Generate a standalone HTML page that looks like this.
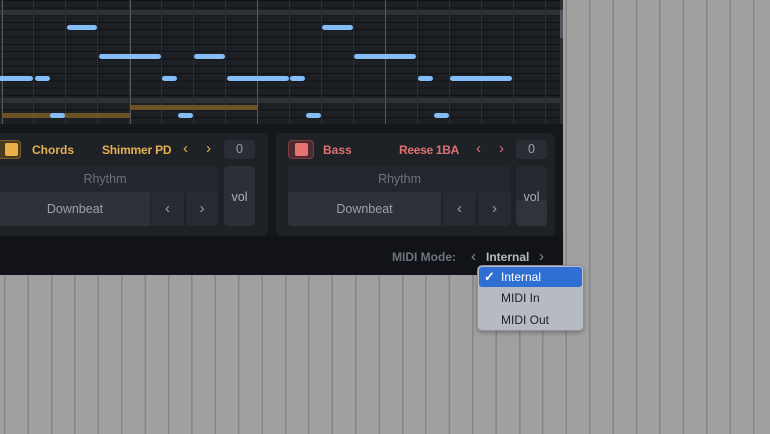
<!DOCTYPE html>
<html><head><meta charset="utf-8"><style>
*{margin:0;padding:0;box-sizing:border-box}
body{width:770px;height:434px;overflow:hidden;position:relative;font-family:"Liberation Sans",sans-serif;
background:repeating-linear-gradient(90deg,#868686 0 1.5px,#a0a0a0 1.5px 23.4px);background-position:4px 0}
.abs{position:absolute}
#main{left:0;top:0;width:563px;height:275px;background:#15171c;border-bottom-right-radius:6px;overflow:hidden}
.note{position:absolute;height:5px;border-radius:3px;background:#84bdf7}
.brown{position:absolute;height:5px;background:#6b5326}
.panel{position:absolute;top:133px;height:103px;background:#1e2227;border-radius:6px}
.t{position:absolute;font-size:12px;font-weight:bold;line-height:16px}
.c{position:absolute;font-size:15px;line-height:16px}
.box{position:absolute;border-radius:4px;color:#9aa0a8;font-size:12.5px;text-align:center}
.g{color:#6e737b}
</style></head><body>
<div id="main" class="abs">
 <div class="abs" style="left:0;top:0;width:560px;height:124px;background:
  repeating-linear-gradient(180deg,#0f1115 0 1px,#1c1f24 1px 7.3px)"></div>
 <div class="abs" style="left:0;top:10px;width:560px;height:5px;background:#2e3136"></div>
 <div class="abs" style="left:0;top:98px;width:560px;height:5px;background:#2e3136"></div>
 <div class="abs" style="left:0;top:0;width:560px;height:124px;background:repeating-linear-gradient(90deg,#2a2d33 0 1px,transparent 1px 32px);background-position:1px 0"></div>
 <div class="abs" style="left:2px;top:0;width:1px;height:124px;background:#55585e"></div>
 <div class="abs" style="left:130px;top:0;width:1px;height:124px;background:#55585e"></div>
 <div class="abs" style="left:257px;top:0;width:1px;height:124px;background:#55585e"></div>
 <div class="abs" style="left:385px;top:0;width:1px;height:124px;background:#55585e"></div>
 <div class="abs" style="left:560px;top:0;width:3px;height:124px;background:#2b2e33"></div>
 <div class="abs" style="left:560px;top:10px;width:3px;height:28px;background:#55585e"></div>
 <div class="note" style="left:67px;top:25px;width:30px"></div>
 <div class="note" style="left:322px;top:25px;width:31px"></div>
 <div class="note" style="left:99px;top:54px;width:62px"></div>
 <div class="note" style="left:194px;top:54px;width:31px"></div>
 <div class="note" style="left:354px;top:54px;width:62px"></div>
 <div class="note" style="left:-3px;top:76px;width:36px"></div>
 <div class="note" style="left:35px;top:76px;width:15px"></div>
 <div class="note" style="left:162px;top:76px;width:15px"></div>
 <div class="note" style="left:227px;top:76px;width:62px"></div>
 <div class="note" style="left:290px;top:76px;width:15px"></div>
 <div class="note" style="left:418px;top:76px;width:15px"></div>
 <div class="note" style="left:450px;top:76px;width:62px"></div>
 <div class="brown" style="left:130px;top:105px;width:127px"></div>
 <div class="brown" style="left:2px;top:113px;width:128px"></div>
 <div class="note" style="left:50px;top:113px;width:15px"></div>
 <div class="note" style="left:178px;top:113px;width:15px"></div>
 <div class="note" style="left:306px;top:113px;width:15px"></div>
 <div class="note" style="left:434px;top:113px;width:15px"></div>

 <div class="panel" style="left:-8px;width:276px"></div>
 <div class="abs" style="left:-8px;top:140px;width:29px;height:19px;border-radius:4px;background:#4a3a1e;border:1px solid #7a5e2a"></div>
 <div class="abs" style="left:5px;top:143px;width:13px;height:13px;border-radius:2px;background:#eab04c"></div>
 <div class="t" style="left:32px;top:142px;color:#e6b050">Chords</div>
 <div class="t" style="left:102px;top:142px;color:#e6b050;letter-spacing:-0.2px">Shimmer PD</div>
 <div class="c" style="left:183px;top:141px;color:#e6b050">‹</div>
 <div class="c" style="left:206px;top:141px;color:#e6b050">›</div>
 <div class="box" style="left:224px;top:140px;width:31px;height:19px;background:#2a2e34;line-height:19px">0</div>
 <div class="box g" style="left:-8px;top:166px;width:226px;height:28px;background:#23272d;line-height:26px">Rhythm</div>
 <div class="box" style="left:-8px;top:192px;width:158px;height:34px;background:#2e3238;line-height:34px;border-radius:0 0 0 4px;padding-left:8px">Downbeat</div>
 <div class="box" style="left:151px;top:192px;width:33px;height:34px;background:#272b31;line-height:34px;border-radius:0;font-size:15px">‹</div>
 <div class="box" style="left:186px;top:192px;width:32px;height:34px;background:#272b31;line-height:34px;border-radius:0 0 4px 0;font-size:15px">›</div>
 <div class="box" style="left:224px;top:166px;width:31px;height:60px;background:#2c3036;padding-top:23px;line-height:16px;color:#aab0b8">vol</div>

 <div class="panel" style="left:276px;width:279px"></div>
 <div class="abs" style="left:288px;top:140px;width:26px;height:19px;border-radius:4px;background:#4a2a2c;border:1px solid #7a3e40"></div>
 <div class="abs" style="left:295px;top:143px;width:13px;height:13px;border-radius:2px;background:#e87272"></div>
 <div class="t" style="left:323px;top:142px;color:#e07070">Bass</div>
 <div class="t" style="left:399px;top:142px;color:#e07070;letter-spacing:-0.3px">Reese 1BA</div>
 <div class="c" style="left:476px;top:141px;color:#e07070">‹</div>
 <div class="c" style="left:499px;top:141px;color:#e07070">›</div>
 <div class="box" style="left:516px;top:140px;width:31px;height:19px;background:#2a2e34;line-height:19px">0</div>
 <div class="box g" style="left:288px;top:166px;width:223px;height:28px;background:#23272d;line-height:26px">Rhythm</div>
 <div class="box" style="left:288px;top:192px;width:153px;height:34px;background:#2e3238;line-height:34px;border-radius:0 0 0 4px">Downbeat</div>
 <div class="box" style="left:443px;top:192px;width:33px;height:34px;background:#272b31;line-height:34px;border-radius:0;font-size:15px">‹</div>
 <div class="box" style="left:478px;top:192px;width:33px;height:34px;background:#272b31;line-height:34px;border-radius:0 0 4px 0;font-size:15px">›</div>
 <div class="box" style="left:516px;top:166px;width:31px;height:60px;background:#262a30"></div>
 <div class="box" style="left:516px;top:200px;width:31px;height:26px;background:#30343a;border-radius:4px"></div>
 <div class="box" style="left:516px;top:189px;width:31px;line-height:16px;color:#aab0b8">vol</div>

 <div class="abs" style="left:0;top:236px;width:563px;height:39px;background:#111318"></div>
 <div class="abs" style="left:392px;top:250px;font-size:12px;font-weight:bold;color:#6f747c">MIDI Mode:</div>
 <div class="abs" style="left:471px;top:248px;font-size:15px;color:#8a8f96">‹</div>
 <div class="abs" style="left:486px;top:250px;font-size:12px;font-weight:bold;color:#b6bac0">Internal</div>
 <div class="abs" style="left:539px;top:248px;font-size:15px;color:#8a8f96">›</div>
</div>
<div class="abs" style="left:477px;top:265px;width:107px;height:66px;background:#b6bac2;border:1px solid #8d9098;border-radius:5px;box-shadow:0 2px 4px rgba(0,0,0,.25)"></div>
<div class="abs" style="left:479px;top:267px;width:103px;height:20px;background:#2f6fd3;border-radius:3px"></div>
<div class="abs" style="left:484px;top:268px;font-size:13px;font-weight:bold;color:#fff;line-height:18px">✓</div>
<div class="abs" style="left:501px;top:269px;font-size:12px;color:#fff;line-height:16px">Internal</div>
<div class="abs" style="left:501px;top:290px;font-size:12px;color:#1e1f22;line-height:16px">MIDI In</div>
<div class="abs" style="left:501px;top:312px;font-size:12px;color:#1e1f22;line-height:16px">MIDI Out</div>
</body></html>
